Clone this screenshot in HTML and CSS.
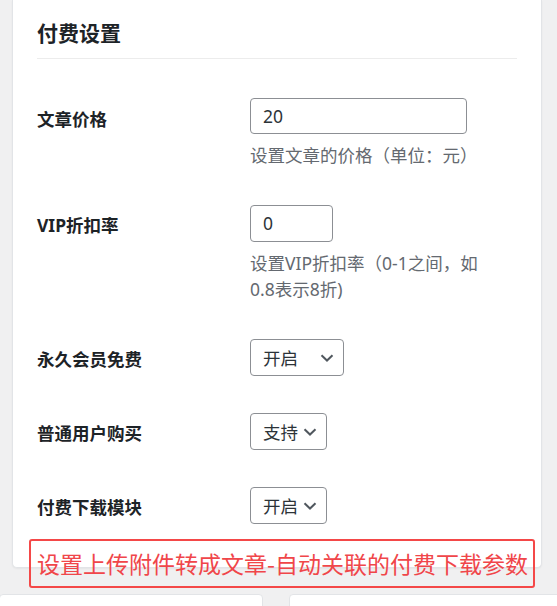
FILE: index.html
```html
<!DOCTYPE html>
<html lang="zh-CN">
<head>
<meta charset="utf-8">
<title>付费设置</title>
<link rel="stylesheet" href="styles.css">
</head>
<body>
<div class="page">
  <section class="card">
    <h2 class="card-title">付费设置</h2>
    <div class="form">
      <div class="row row-first">
        <div class="label">文章价格</div>
        <div class="field">
          <div class="input input-wide">20</div>
          <p class="desc">设置文章的价格（单位：元）</p>
        </div>
      </div>
      <div class="row">
        <div class="label">VIP折扣率</div>
        <div class="field">
          <div class="input input-small">0</div>
          <p class="desc">设置VIP折扣率（0-1之间，如0.8表示8折)</p>
        </div>
      </div>
      <div class="row">
        <div class="label">永久会员免费</div>
        <div class="field">
          <div class="select select-wide"><span>开启</span><svg class="chev" viewBox="0 0 14 8" width="14" height="8"><path d="M1.5 1.2 L7 6.5 L12.5 1.2" fill="none" stroke="#50575e" stroke-width="2"/></svg></div>
        </div>
      </div>
      <div class="row">
        <div class="label">普通用户购买</div>
        <div class="field">
          <div class="select"><span>支持</span><svg class="chev" viewBox="0 0 14 8" width="14" height="8"><path d="M1.5 1.2 L7 6.5 L12.5 1.2" fill="none" stroke="#50575e" stroke-width="2"/></svg></div>
        </div>
      </div>
      <div class="row">
        <div class="label">付费下载模块</div>
        <div class="field">
          <div class="select"><span>开启</span><svg class="chev" viewBox="0 0 14 8" width="14" height="8"><path d="M1.5 1.2 L7 6.5 L12.5 1.2" fill="none" stroke="#50575e" stroke-width="2"/></svg></div>
        </div>
      </div>
    </div>
  </section>
  <div class="lower">
    <div class="lower-card"></div>
    <div class="lower-card"></div>
  </div>
  <div class="note">设置上传附件转成文章-自动关联的付费下载参数</div>
</div>
</body>
</html>
```
FILE: styles.css
```css
html, body {
  margin: 0;
  padding: 0;
}
body {
  background: #f0f0f1;
  font-family: "Noto Sans", "Noto Sans CJK SC", sans-serif;
  color: #1d2327;
  width: 557px;
  height: 606px;
  overflow: hidden;
}
.page {
  position: relative;
  height: 606px;
}
.card {
  margin-left: 12px;
  width: 530px;
  box-sizing: border-box;
  background: #fff;
  border: 1px solid #e2e4e7;
  border-top: 0;
  border-radius: 0 0 5px 5px;
  box-shadow: 0 1px 2px rgba(0,0,0,0.05);
  padding: 0 24px 43px 24px;
}
.card-title {
  margin: 0;
  padding-top: 18px;
  padding-bottom: 10px;
  font-size: 21px;
  line-height: 30px;
  font-weight: 700;
  border-bottom: 1px solid #ececec;
}
.row {
  display: grid;
  grid-template-columns: 213px 1fr;
  margin-top: 37px;
}
.row-first {
  margin-top: 39px;
}
.label {
  font-size: 17.5px;
  font-weight: 700;
  line-height: 24px;
  padding-top: 8px;
}
.row-first .label {
  padding-top: 9px;
}
.field {
  display: flex;
  flex-direction: column;
  align-items: flex-start;
}
.input,
.select {
  box-sizing: border-box;
  height: 36px;
  border: 1px solid #8c8f94;
  border-radius: 4px;
  background: #fff;
  font-size: 17.5px;
  line-height: 34px;
  padding: 0 12px;
  color: #2c3338;
}
.input-wide { width: 217px; }
.input-small { width: 83px; height: 37px; }
.select {
  display: flex;
  align-items: center;
  justify-content: space-between;
  width: 77px;
  height: 37px;
  padding-right: 9px;
}
.select-wide { width: 94px; }
.chev { display: block; flex: none; }
.desc {
  margin: 8px 0 0 0;
  width: 235px;
  font-size: 17.5px;
  line-height: 26px;
  color: #646970;
}
.lower {
  display: grid;
  grid-template-columns: 264px 1fr;
  gap: 26px;
  margin-top: 26px;
  margin-left: -1px;
  margin-right: -10px;
}
.lower-card {
  height: 40px;
  background: #fff;
  border: 1px solid #e2e4e7;
  border-radius: 4px 4px 0 0;
}
.note {
  position: absolute;
  left: 29px;
  top: 539px;
  width: 506px;
  height: 49px;
  box-sizing: border-box;
  border: 2px solid #f44848;
  border-radius: 3px;
  padding-left: 6px;
  font-family: "Noto Sans CJK SC", sans-serif;
  font-size: 23px;
  line-height: 45px;
  color: #f0464a;
  white-space: nowrap;
}
```
